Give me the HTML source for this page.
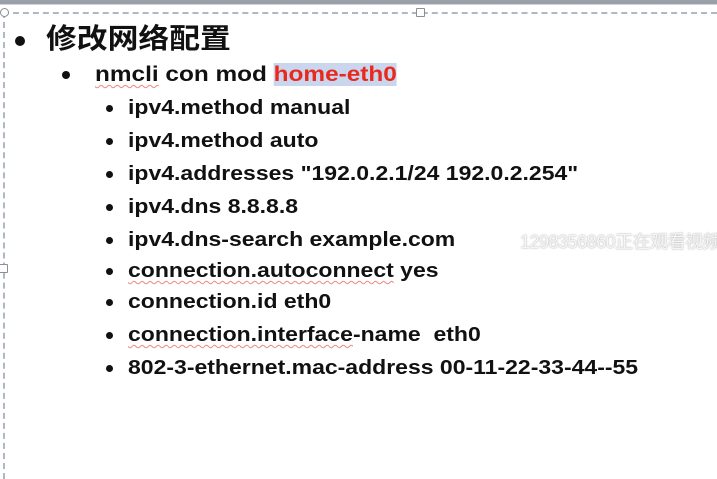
<!DOCTYPE html>
<html><head><meta charset="utf-8"><style>
html,body{margin:0;padding:0;width:717px;height:479px;background:#fff;overflow:hidden;position:relative;font-family:"Liberation Sans","Noto Sans CJK SC",sans-serif;font-weight:bold;color:#111;}
.top{position:absolute;left:0;top:0;width:717px;height:4px;background:#9aa0a8;}
.top2{position:absolute;left:0;top:4px;width:717px;height:1px;background:#d0d4d8;}
.dh{position:absolute;top:12px;left:3px;width:714px;border-top:2px dashed #b0b8c4;}
.dv{position:absolute;left:3px;top:12px;height:467px;border-left:2px dashed #b0b8c4;}
.hd{position:absolute;width:7px;height:7px;border:1px solid #8a8f96;background:#fff;border-radius:1px;}
.t{position:absolute;white-space:nowrap;transform-origin:0 50%;}
.s{transform:scaleX(1.15);}
.b{position:absolute;border-radius:50%;background:#111;}
.sq{text-decoration:underline wavy #e88;text-decoration-thickness:1px;text-underline-offset:3px;}
</style></head><body>
<div class="top"></div><div class="top2"></div>
<div class="dh"></div><div class="dv"></div>
<div class="hd" style="left:0;top:8px;border-radius:50%"></div>
<div class="hd" style="left:416px;top:8px"></div>
<div class="hd" style="left:-1px;top:264px"></div>

<div class="b" style="left:15px;top:36px;width:10px;height:10px"></div>
<div class="t" style="left:46px;top:21px;font-size:28px;line-height:36px;transform:scaleX(1.1)">修改网络配置</div>

<div class="b" style="left:62px;top:71px;width:8px;height:8px"></div>
<div class="t" style="left:95px;top:62px;font-size:21px;line-height:26px;transform:scaleX(1.16)"><span class="sq">nmcli</span> con mod <span style="color:#e8291c;background:#c9d6ee">home-eth0</span></div>

<div class="b" style="left:106px;top:105px;width:7px;height:7px"></div>
<div class="t s" style="left:128px;top:96px;font-size:20px;line-height:24px">ipv4.method manual</div>
<div class="b" style="left:106px;top:138px;width:7px;height:7px"></div>
<div class="t s" style="left:128px;top:129px;font-size:20px;line-height:24px">ipv4.method auto</div>
<div class="b" style="left:106px;top:171px;width:7px;height:7px"></div>
<div class="t s" style="left:128px;top:162px;font-size:20px;line-height:24px">ipv4.addresses "192.0.2.1/24 192.0.2.254"</div>
<div class="b" style="left:106px;top:204px;width:7px;height:7px"></div>
<div class="t s" style="left:128px;top:195px;font-size:20px;line-height:24px">ipv4.dns 8.8.8.8</div>
<div class="b" style="left:106px;top:237px;width:7px;height:7px"></div>
<div class="t s" style="left:128px;top:228px;font-size:20px;line-height:24px">ipv4.dns-search example.com</div>
<div class="b" style="left:106px;top:268px;width:7px;height:7px"></div>
<div class="t s" style="left:128px;top:259px;font-size:20px;line-height:24px"><span class="sq">connection.autoconnect</span> yes</div>
<div class="b" style="left:106px;top:299px;width:7px;height:7px"></div>
<div class="t s" style="left:128px;top:290px;font-size:20px;line-height:24px">connection.id eth0</div>
<div class="b" style="left:106px;top:332px;width:7px;height:7px"></div>
<div class="t s" style="left:128px;top:323px;font-size:20px;line-height:24px"><span class="sq">connection.interface</span>-name&nbsp; eth0</div>
<div class="b" style="left:106px;top:365px;width:7px;height:7px"></div>
<div class="t s" style="left:128px;top:356px;font-size:20px;line-height:24px">802-3-ethernet.mac-address 00-11-22-33-44--55</div>

<div class="t" style="left:520px;top:231px;font-size:18px;line-height:22px;font-weight:normal;color:#f6f6f6;text-shadow:0 0 1px #aaa,0 0 2px #ccc;letter-spacing:-0.5px">1298356860正在观看视频</div>
</body></html>
